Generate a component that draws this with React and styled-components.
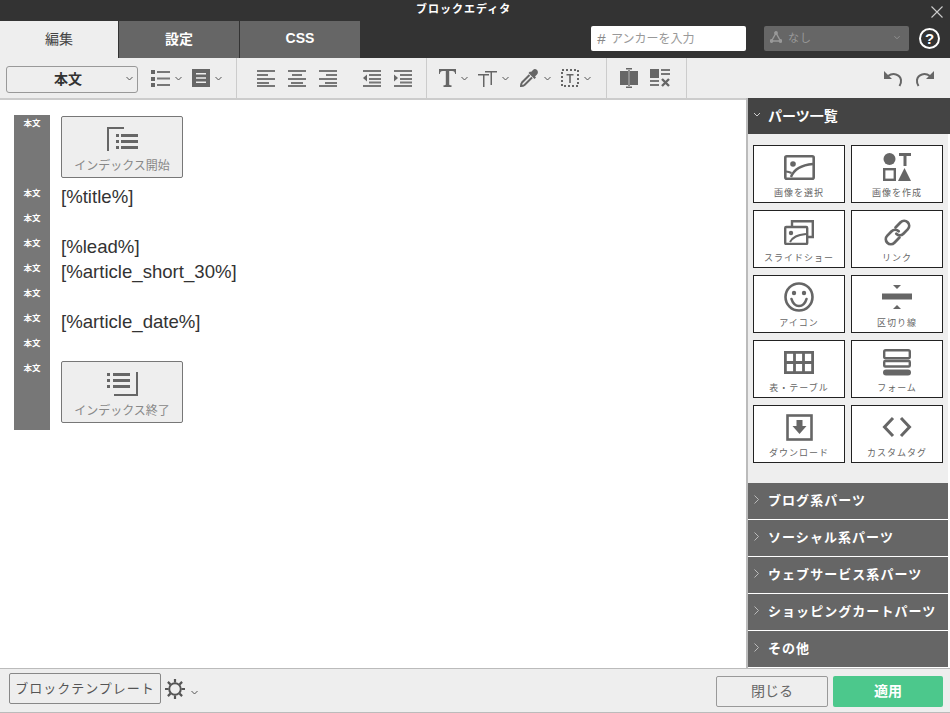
import React from 'react';
import styled, { createGlobalStyle } from 'styled-components';

const Global = createGlobalStyle`
  html, body { margin: 0; padding: 0; background: #fff; }
  * { box-sizing: border-box; }
  #root { width: 950px; height: 713px; overflow: hidden; }
`;
const JP = `"Liberation Sans", "Noto Sans CJK JP", sans-serif`;

const Page = styled.div`
  width: 950px; height: 713px; display: flex; flex-direction: column;
  font-family: ${JP}; background: #fff;
`;
const TitleBar = styled.header`
  height: 21px; background: #333; display: grid; grid-template-columns: 416px auto 1fr; align-items: center;
`;
const Title = styled.h1`
  grid-column: 2; margin: -3px 0 0; font-size: 11px; font-weight: 700; color: #fff; letter-spacing: 1px; line-height: 18px;
`;
const CloseBtn = styled.button`
  grid-column: 3; justify-self: end; border: 0; background: none; padding: 0; margin: 5px 7px 0 0; width: 12px; height: 14px; display: flex; cursor: pointer;
`;
const TabRow = styled.div`
  height: 37px; background: #333; display: flex; align-items: stretch; position: relative;
`;
const Tab = styled.div`
  width: ${p => p.$w}px; margin-right: 1px; display: flex; align-items: center; justify-content: center; font-size: 14px; padding-bottom: 3px;
  background: ${p => (p.$active ? '#eee' : '#666')}; color: ${p => (p.$active ? '#444' : '#fff')}; font-weight: ${p => (p.$active ? 400 : 700)};
`;
const TabTools = styled.div`
  margin-left: 230px; display: flex; align-items: flex-start; padding-top: 5px;
`;
const Anchor = styled.label`
  width: 155px; height: 25px; background: #fff; border-radius: 2px; display: flex; align-items: center; padding-left: 4px; gap: 3px;
`;
const AnchorHash = styled.span`
  width: 13px; text-align: center; color: #888; font-size: 15px; line-height: 1;
`;
const AnchorInput = styled.input`
  border: 0; outline: 0; padding: 0; width: 125px; font: 12px ${JP}; background: transparent;
  &::placeholder { color: #999; opacity: 1; }
`;
const ClassSelect = styled.div`
  width: 145px; height: 25px; margin-left: 18px; background: #666; border-radius: 2px; color: #999; font-size: 11px; letter-spacing: 1px; display: flex; align-items: center; padding: 0 9px 3px 6px; gap: 6px;
`;
const Grow = styled.div`flex: 1;`;
const Help = styled.button`
  margin: 2px 0 0 10px; width: 21px; height: 21px; border: 2px solid #fff; border-radius: 50%; background: none; color: #fff; font: 700 15px/1 ${JP}; padding: 0; display: flex; align-items: center; justify-content: center;
`;

const Toolbar = styled.div`
  height: 40px; background: #eee; display: flex; align-items: stretch;
`;
const ToolSection = styled.div`
  width: ${p => p.$w}px; padding-left: ${p => p.$pad}px; border-right: 1px solid #ccc; display: flex; align-items: center;
`;
const ToolSelect = styled.div`
  width: 132px; height: 27px; margin-right: 13px; border: 1px solid #999; border-radius: 3px; background: #eee; display: flex; align-items: center;
  font-size: 14px; font-weight: 700; color: #333; padding: 0 4px 2px 47px; margin-top: 2px; justify-content: space-between;
`;
const Tool = styled.button`
  width: ${p => p.$w}px; margin-right: ${p => p.$mr || 0}px; height: 22px; display: flex; align-items: center; gap: 5px; border: 0; background: none; padding: 0; cursor: pointer;
`;
const HistoryTools = styled.div`
  margin-left: auto; display: flex; align-items: center; gap: 12px; padding-right: 16px;
`;

const Main = styled.div`flex: 1; display: flex; min-height: 0;`;
const Editor = styled.main`
  width: 746px; border-top: 2px solid #ccc; padding: 15px 0 0 14px; background: #fff;
`;
const BlockList = styled.div`width: 300px;`;
const BlockRow = styled.div`
  display: flex; align-items: flex-start; min-height: 25px;
`;
const BlockTag = styled.div`
  width: 36px; align-self: stretch; background: #777; color: #fff; font-size: 8.5px; font-weight: 700; text-align: center; line-height: 16px; flex: none;
`;
const BlockBody = styled.div`
  margin-left: 11px; font-size: 18.6px; line-height: 23px; color: #333; white-space: nowrap; height: ${p => (p.$tall ? '70px' : '25px')}; padding-top: ${p => (p.$tall ? '1px' : 0)};
`;
const IndexBtn = styled.div`
  width: 122px; height: 62px; background: #eee; border: 1px solid #777; border-radius: 2px; display: flex; flex-direction: column; align-items: center; padding-top: 10px; gap: 6px;
  font-size: 12px; line-height: 18px; color: #888;
`;

const Sidebar = styled.aside`
  width: 204px; border-left: 2px solid #bbb; display: flex; flex-direction: column; background: #fff;
`;
const PartsHead = styled.div`
  height: 36px; background: #444; color: #fff; font-size: 14px; font-weight: 700; display: flex; align-items: center; padding: 0 0 3px 5px; gap: 7px;
`;
const PartsPanel = styled.div`
  height: 349px; margin-right: 2px; background: #eee; padding: 11px 5px 0; display: grid; grid-template-columns: 92px 92px; grid-auto-rows: 58px; gap: 7px 6px; align-content: start;
`;
const Card = styled.button`
  border: 1px solid #222; background: #fff; padding: 0; display: flex; flex-direction: column; align-items: center; color: #666; font: 9px/12px ${JP}; letter-spacing: 1px; cursor: pointer;
`;
const CardIcon = styled.div`
  height: 33px; margin-top: 4.5px; margin-bottom: 3.5px; display: flex; align-items: center; justify-content: center;
`;
const Accordion = styled.div`
  height: 36px; margin: 0 2px 1px 0; background: #666; color: #fff; font-size: 13px; font-weight: 700; letter-spacing: 1.05px; display: flex; align-items: center; padding: 0 0 3px 6px; gap: 9px;
`;

const Footer = styled.footer`
  height: 45px; background: #eee; border-top: 1px solid #bbb; border-bottom: 1px solid #bbb; display: flex; align-items: flex-start; padding: 4px 7px 0 9px;
`;
const TemplateBtn = styled.button`
  width: 152px; height: 31px; border: 1px solid #888; border-radius: 2px; background: #eee; color: #555; font: 13px ${JP}; letter-spacing: 1px; padding: 0 0 2px; white-space: nowrap;
`;
const GearBtn = styled.button`
  margin: 6px 0 0 4px; border: 0; background: none; padding: 0; display: flex; align-items: center; gap: 5px;
`;
const GearChev = styled.span`
  display: flex; margin-top: 6px;
`;
const FooterBtn = styled.button`
  width: ${p => p.$w}px; height: 31px; margin: 3px 0 0 ${p => p.$ml}px; border-radius: 2px; font: ${p => (p.$primary ? 700 : 400)} 14px ${JP}; padding: 0 0 4px;
  background: ${p => (p.$primary ? '#4cc88c' : '#eee')}; color: ${p => (p.$primary ? '#fff' : '#666')}; border: ${p => (p.$primary ? '0' : '1px solid #999')};
`;

const G = '#666';
const Chev = ({ c = '#555', dir = 'down', s = 7 }) => (
  <svg width={dir === 'down' ? s : 5} height={dir === 'down' ? 5 : 9} viewBox={dir === 'down' ? '0 0 7 5' : '0 0 5 9'} fill="none" stroke={c} strokeWidth="1">
    {dir === 'down' ? <path d="M.5 1 3.5 4 6.5 1" /> : <path d="M.5.5 4.5 4.5.5 8.5" />}
  </svg>
);
const I = ({ w = 18, h = 18, children, vb }) => (
  <svg width={w} height={h} viewBox={vb || `0 0 ${w} ${h}`} fill={G} style={{ flex: 'none' }}>{children}</svg>
);
const Lines = ({ rows }) => rows.map(([x, y, w, ht = 2], i) => <rect key={i} x={x} y={y} width={w} height={ht} fill="#777" />);

const ListIcon = () => <I w={19} h={18}><rect x="0" y="1" width="4" height="4" /><rect x="0" y="8" width="4" height="4" /><rect x="0" y="14" width="4" height="4" /><rect x="6" y="2" width="13" height="2" fill="#777"/><rect x="6" y="8.5" width="13" height="2" fill="#777"/><rect x="6" y="15" width="13" height="2" fill="#777"/></I>;
const BlockIcon = () => <I w={18} h={18}><path fillRule="evenodd" d="M0 0h18v18H0zM4 4v1.6h10V4zm0 4.2v1.6h10V8.2zm0 4.2V14h10v-1.6z" /></I>;
const AlignL = () => <I><Lines rows={[[0,1,18],[0,5,11],[0,9,18],[0,13,12],[0,16,18]]} /></I>;
const AlignC = () => <I><Lines rows={[[0,1,18],[4,5,10],[0,9,18],[3,13,12],[0,16,18]]} /></I>;
const AlignR = () => <I><Lines rows={[[0,1,18],[7,5,11],[0,9,18],[6,13,12],[0,16,18]]} /></I>;
const Outdent = () => <I><Lines rows={[[0,1,18],[6,5,12],[6,9,12],[6,12.5,12],[0,16,18]]} /><path d="M4 5.5v7L0 9z" /></I>;
const Indent = () => <I><Lines rows={[[0,1,18],[6,5,12],[6,9,12],[6,12.5,12],[0,16,18]]} /><path d="M0 5.5v7L4 9z" /></I>;
const BigT = () => <I w={17} h={18}><path d="M0 0h17v5h-.8c-.3-2-1-3-3-3h-3v13.200c0 .8.500 1 2.300 1.100V18H4.500v-1.700c1.800-.1 2.300-.3 2.300-1.100V2h-3c-2 0-2.700 1-3 3H0z" /></I>;
const TT = () => <I w={19} h={18}><path d="M0 5h11v1.500H6.500V18H5V6.500H0zM7 2h12v1.500h-5V16h-1.500V3.500H7z" /></I>;
const Dropper = () => <svg width="19" height="18" viewBox="0 0 19 18"><path d="M11 3l2-2c1-1.200 2.800-1.200 4 0s1.200 3 0 4.500L15 7.500l1 1-1.500 1.500-6-6L10 2.500z" fill="#666" /><path d="M9.500 6 2 13.500C1.200 14.500 1 16 1 17c1 0 2.500-.2 3.500-1L12 8.500" fill="none" stroke="#666" strokeWidth="2" /></svg>;
const DottedT = () => <svg width="18" height="18" viewBox="0 0 18 18" fill="none"><rect x="1" y="1" width="16" height="16" stroke="#666" strokeWidth="2" strokeDasharray="2 2" /><path d="M5.500 5h7v1.500H9.800V14H8.200V6.500H5.500z" fill="#666" /></svg>;
const ColIcon = () => <I w={18} h={20}><path d="M0 3h8v14H0zM10 3h8v14h-8z" /><rect x="8.300" y="2" width="1.400" height="16" /><path d="M6 0h6v1.400H6zM6 18.600h6V20H6z" /></I>;
const ClearIcon = () => <I w={20} h={18}><rect y="0" width="9" height="9" /><Lines rows={[[11,0,9],[11,4,9],[0,11,9],[0,15,9]]} /><path d="M12 10l7 7M19 10l-7 7" stroke="#666" strokeWidth="2.400" /></I>;
const Undo = () => <svg width="19" height="17" viewBox="0 0 19 17" fill="none"><path d="M0 1v8h8z" fill="#666" /><path d="M4 6c5-3.500 12-2 13 4 .3 2-.3 4-1.500 6" stroke="#666" strokeWidth="2" /></svg>;
const Redo = () => <svg width="19" height="17" viewBox="0 0 19 17" fill="none"><path d="M19 1v8h-8z" fill="#666" /><path d="M15 6C10 2.500 3 4 2 10c-.3 2 .3 4 1.500 6" stroke="#666" strokeWidth="2" /></svg>;

const ImgIcon = () => <svg width="31" height="25" viewBox="0 0 31 25" fill="none"><rect x="1.300" y="1.300" width="28.400" height="22.400" rx="1.500" stroke="#666" strokeWidth="2.600" /><circle cx="9" cy="9" r="2.800" fill="#666" /><path d="M7 22c3-8 10-12 22-13" stroke="#666" strokeWidth="2.400" /><path d="M2 16.500c2 .2 4 .8 5.500 1.500" stroke="#666" strokeWidth="2" /></svg>;
const ShapesIcon = () => <svg width="28" height="28" viewBox="0 0 28 28" fill="#666"><circle cx="6.500" cy="6" r="6" /><path d="M16 0h12v3h-4.500v10h-3V3H16z" /><rect x="1.200" y="16.200" width="10.600" height="10.600" fill="none" stroke="#666" strokeWidth="2.400" /><path d="M21.500 15 28 28H15z" /></svg>;
const SlideIcon = () => <svg width="30" height="25" viewBox="0 0 30 25" fill="none" stroke="#666" strokeWidth="2.400"><path d="M8 6V1.200h20.800V17H24" /><rect x="1.200" y="7" width="22" height="17" rx="1" /><circle cx="7" cy="13" r="2.200" fill="#666" stroke="none" /><path d="M6 22c3-5 7-7 16-8" strokeWidth="2" /></svg>;
const LinkHalf = () => <path d="M9.500 12V5.500a4.500 4.500 0 0 1 9 0V11a4.500 4.500 0 0 1-4.500 4.500" />;
const LinkIcon = () => <svg width="31" height="31" viewBox="0 0 28 28" fill="none" stroke="#666" strokeWidth="2.500" strokeLinecap="round"><g transform="rotate(45 14 14)"><LinkHalf /><g transform="rotate(180 14 14)"><LinkHalf /></g></g></svg>;
const Smile = () => <svg width="30" height="30" viewBox="0 0 30 30" fill="none"><circle cx="15" cy="15" r="13.500" stroke="#666" strokeWidth="2.600" /><circle cx="10" cy="11" r="2.200" fill="#666" /><circle cx="20" cy="11" r="2.200" fill="#666" /><path d="M7.500 17c1.500 5 4.500 7 7.500 7s6-2 7.500-7" stroke="#666" strokeWidth="2.600" strokeLinecap="round" /></svg>;
const Divider = () => <svg width="30" height="26" viewBox="0 0 30 26" fill="#666"><path d="M11 1h8L15 5z" /><rect y="9.500" width="30" height="6" /><path d="M11 25h8L15 21z" /></svg>;
const TableIcon = () => <svg width="30" height="23" viewBox="0 0 30 23" fill="none" stroke="#666" strokeWidth="2.800"><rect x="1.400" y="1.400" width="27.200" height="20.200" /><path d="M10.500 1v21M19.500 1v21M1 11.500h28" /></svg>;
const FormIcon = () => <svg width="28" height="27" viewBox="0 0 28 27" fill="none"><rect x="1.200" y="1.200" width="25.600" height="8" rx="1.500" stroke="#666" strokeWidth="2.400" /><rect x="1.200" y="12" width="25.600" height="5.500" rx="1" stroke="#666" strokeWidth="2.400" /><rect y="20.500" width="28" height="6" rx="3" fill="#666" /></svg>;
const DownIcon = () => <svg width="27" height="27" viewBox="0 0 27 27" fill="none"><rect x="1.500" y="1.500" width="24" height="24" stroke="#666" strokeWidth="2.600" /><path d="M10.500 6h6v6h4l-7 8-7-8h4z" fill="#666" /></svg>;
const CodeIcon = () => <svg width="30" height="22" viewBox="0 0 30 22" fill="none" stroke="#666" strokeWidth="3"><path d="M11 2 2.500 11l8.500 9M19 2l8.500 9-8.500 9" /></svg>;
const IdxStart = () => <svg width="31" height="24" viewBox="0 0 31 24" fill="#666"><path d="M0 0h17v2H2v22H0z" /><rect x="9" y="7" width="3" height="3" /><rect x="9" y="13" width="3" height="3" /><rect x="9" y="19" width="3" height="3" /><rect x="14" y="7" width="17" height="3" /><rect x="14" y="13" width="17" height="3" /><rect x="14" y="19" width="17" height="3" /></svg>;
const IdxEnd = () => <svg width="31" height="24" viewBox="0 0 31 24" fill="#666"><path d="M31 0v24H7v-2h22V0z" /><rect x="0" y="1" width="3" height="3" /><rect x="0" y="7" width="3" height="3" /><rect x="0" y="13" width="3" height="3" /><rect x="6" y="1" width="17" height="3" /><rect x="6" y="7" width="17" height="3" /><rect x="6" y="13" width="17" height="3" /></svg>;
const Gear = () => <svg width="20" height="20" viewBox="0 0 20 20" fill="none" stroke="#555"><circle cx="10" cy="10" r="5.800" strokeWidth="2" /><g strokeWidth="2.200"><path d="M10 0v3.500M10 16.500V20M0 10h3.500M16.500 10H20M2.900 2.900l2.500 2.500M14.600 14.600l2.500 2.500M2.900 17.100l2.500-2.500M14.600 5.400l2.500-2.500" /></g></svg>;

const parts = [
  ['画像を選択', <ImgIcon />], ['画像を作成', <ShapesIcon />], ['スライドショー', <SlideIcon />], ['リンク', <LinkIcon />],
  ['アイコン', <Smile />], ['区切り線', <Divider />], ['表・テーブル', <TableIcon />], ['フォーム', <FormIcon />],
  ['ダウンロード', <DownIcon />], ['カスタムタグ', <CodeIcon />],
];
const groups = ['ブログ系パーツ', 'ソーシャル系パーツ', 'ウェブサービス系パーツ', 'ショッピングカートパーツ', 'その他'];
const blocks = [
  { btn: 'インデックス開始', icon: <IdxStart /> }, { t: '[%title%]' }, { t: '' }, { t: '[%lead%]' }, { t: '[%article_short_30%]' },
  { t: '' }, { t: '[%article_date%]' }, { t: '' }, { btn: 'インデックス終了', icon: <IdxEnd /> },
];

export default function App() {
  return (
    <Page>
      <Global />
      <TitleBar>
        <Title>ブロックエディタ</Title>
        <CloseBtn aria-label="閉じる"><svg width="12" height="12" viewBox="0 0 12 12" stroke="#ccc" strokeWidth="1.100"><path d="M.5.5l11 11M11.500.5l-11 11" /></svg></CloseBtn>
      </TitleBar>
      <TabRow>
        <Tab $w={118} $active>編集</Tab>
        <Tab $w={120}>設定</Tab>
        <Tab $w={120}>CSS</Tab>
        <TabTools>
          <Anchor><AnchorHash>#</AnchorHash><AnchorInput placeholder="アンカーを入力" /></Anchor>
          <ClassSelect>
            <svg width="12" height="12" viewBox="0 0 12 12" fill="none" stroke="#999" strokeWidth="1.400"><path d="M6 2 1.500 10h9z" /><circle cx="6" cy="2" r="1.200" fill="#999" /><circle cx="1.500" cy="10" r="1.200" fill="#999" /><circle cx="10.500" cy="10" r="1.200" fill="#999" /></svg>
            なし<Grow /><Chev c="#999" s={6} />
          </ClassSelect>
          <Help>?</Help>
        </TabTools>
      </TabRow>
      <Toolbar>
        <ToolSection $w={237} $pad={6}>
          <ToolSelect>本文<Chev /></ToolSelect>
          <Tool $w={41}><ListIcon /><Chev /></Tool>
          <Tool $w={40}><BlockIcon /><Chev /></Tool>
        </ToolSection>
        <ToolSection $w={190} $pad={20}>
          <Tool $w={18} $mr={13}><AlignL /></Tool>
          <Tool $w={18} $mr={13}><AlignC /></Tool>
          <Tool $w={18} $mr={26}><AlignR /></Tool>
          <Tool $w={18} $mr={13}><Outdent /></Tool>
          <Tool $w={18}><Indent /></Tool>
        </ToolSection>
        <ToolSection $w={180} $pad={12}>
          <Tool $w={39}><BigT /><Chev /></Tool>
          <Tool $w={42}><TT /><Chev /></Tool>
          <Tool $w={41}><Dropper /><Chev /></Tool>
          <Tool $w={37}><DottedT /><Chev /></Tool>
        </ToolSection>
        <ToolSection $w={80} $pad={13}>
          <Tool $w={18} $mr={12}><ColIcon /></Tool>
          <Tool $w={20}><ClearIcon /></Tool>
        </ToolSection>
        <HistoryTools><Undo /><Redo /></HistoryTools>
      </Toolbar>
      <Main>
        <Editor>
          <BlockList>
            {blocks.map((b, i) => (
              <BlockRow key={i}>
                <BlockTag>本文</BlockTag>
                <BlockBody $tall={!!b.btn}>
                  {b.btn ? <IndexBtn>{b.icon}{b.btn}</IndexBtn> : b.t}
                </BlockBody>
              </BlockRow>
            ))}
          </BlockList>
        </Editor>
        <Sidebar>
          <PartsHead><Chev c="#ccc" s={8} />パーツ一覧</PartsHead>
          <PartsPanel>
            {parts.map(([label, icon]) => (
              <Card key={label}><CardIcon>{icon}</CardIcon>{label}</Card>
            ))}
          </PartsPanel>
          {groups.map(g => <Accordion key={g}><Chev dir="right" c="#bbb" />{g}</Accordion>)}
        </Sidebar>
      </Main>
      <Footer>
        <TemplateBtn>ブロックテンプレート</TemplateBtn>
        <GearBtn><Gear /><GearChev><Chev s={9} /></GearChev></GearBtn>
        <Grow />
        <FooterBtn $w={112} $ml={0}>閉じる</FooterBtn>
        <FooterBtn $w={110} $ml={5} $primary>適用</FooterBtn>
      </Footer>
    </Page>
  );
}
